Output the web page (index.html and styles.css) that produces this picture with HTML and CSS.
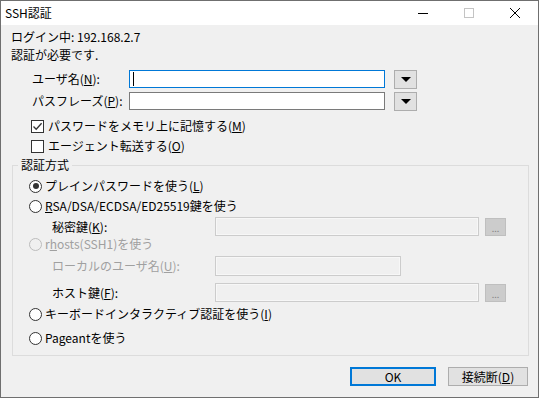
FILE: index.html
```html
<!DOCTYPE html>
<html lang="ja">

<head>
    <meta charset="UTF-8">
    <title>SSH認証</title>
    <link rel="stylesheet" href="styles.css">
</head>

<body>
    <div class="window">
        <div class="titlebar">
            <div class="title">SSH認証</div>
            <div class="caption-buttons">
                <span class="cap">
                    <svg width="10" height="10" viewBox="0 0 10 10"><path d="M0 5.5h10" stroke="#000" stroke-width="1"/></svg>
                </span>
                <span class="cap">
                    <svg width="10" height="10" viewBox="0 0 10 10"><rect x="0.5" y="0.5" width="9" height="9" fill="none" stroke="#c4c4c4"/></svg>
                </span>
                <span class="cap">
                    <svg width="10" height="10" viewBox="0 0 10 10"><path d="M0 0L10 10M10 0L0 10" stroke="#000" stroke-width="1"/></svg>
                </span>
            </div>
        </div>

        <div class="content">
            <div class="line login">ログイン中: 192.168.2.7</div>
            <div class="line required">認証が必要です.</div>

            <div class="field-row user-row">
                <label class="field-label">ユーザ名(<u>N</u>):</label>
                <div class="input focused"><span class="caret"></span></div>
                <button class="drop"><span class="tri"></span></button>
            </div>
            <div class="field-row pass-row">
                <label class="field-label">パスフレーズ(<u>P</u>):</label>
                <div class="input"></div>
                <button class="drop"><span class="tri"></span></button>
            </div>

            <div class="check-row cb1">
                <span class="checkbox">
                    <svg width="11" height="11" viewBox="0 0 11 11"><path d="M1.5 5.5L4.2 8.3L9.6 2.2" fill="none" stroke="#333" stroke-width="1.3"/></svg>
                </span>
                <span>パスワードをメモリ上に記憶する(<u>M</u>)</span>
            </div>
            <div class="check-row cb2">
                <span class="checkbox"></span>
                <span>エージェント転送する(<u>O</u>)</span>
            </div>

            <fieldset class="group">
                <legend>認証方式</legend>

                <div class="radio-row r1">
                    <span class="radio checked"></span>
                    <span>プレインパスワードを使う(<u>L</u>)</span>
                </div>
                <div class="radio-row r2">
                    <span class="radio"></span>
                    <span><u>R</u>SA/DSA/ECDSA/ED25519鍵を使う</span>
                </div>
                <div class="sub-row key-row">
                    <span class="sub-label">秘密鍵(<u>K</u>):</span>
                    <div class="input disabled wide"></div>
                    <button class="dots">...</button>
                </div>
                <div class="radio-row r3 off">
                    <span class="radio"></span>
                    <span>r<u>h</u>osts(SSH1)を使う</span>
                </div>
                <div class="sub-row local-row">
                    <span class="sub-label off">ローカルのユーザ名(<u>U</u>):</span>
                    <div class="input disabled short"></div>
                </div>
                <div class="sub-row host-row">
                    <span class="sub-label">ホスト鍵(<u>F</u>):</span>
                    <div class="input disabled wide"></div>
                    <button class="dots">...</button>
                </div>
                <div class="radio-row r4">
                    <span class="radio"></span>
                    <span>キーボードインタラクティブ認証を使う(<u>I</u>)</span>
                </div>
                <div class="radio-row r5">
                    <span class="radio"></span>
                    <span>Pageantを使う</span>
                </div>
            </fieldset>

            <div class="actions">
                <button class="btn default">OK</button>
                <button class="btn">接続断(<u>D</u>)</button>
            </div>
        </div>
    </div>
</body>

</html>
```

FILE: styles.css
```css
body {
    margin: 0;
    padding: 0;
    background-color: #f0f0f0;
    font-family: "Noto Sans CJK JP", "Noto Sans", sans-serif;
    font-size: 12px;
    color: #000;
}

.window {
    width: 539px;
    height: 398px;
    box-sizing: border-box;
    border: 1px solid #6f6f6f;
    background-color: #f0f0f0;
    display: flex;
    flex-direction: column;
    overflow: hidden;
}

.titlebar {
    height: 24px;
    background-color: #fff;
    display: flex;
    align-items: center;
    justify-content: space-between;
    flex-shrink: 0;
}

.title {
    padding-left: 4px;
    line-height: 14px;
}

.caption-buttons {
    display: flex;
    height: 100%;
}

.cap {
    width: 46px;
    display: flex;
    align-items: center;
    justify-content: center;
}

.cap svg {
    display: block;
}

.content {
    display: flex;
    flex-direction: column;
    padding-left: 10px;
    padding-right: 10px;
}

.line {
    height: 14px;
    line-height: 14px;
}

.login {
    margin-top: 5px;
}

.required {
    margin-top: 4px;
}

/* user / passphrase */
.field-row {
    height: 20px;
    display: flex;
    align-items: center;
    padding-left: 21px;
}

.user-row {
    margin-top: 7px;
}

.pass-row {
    margin-top: 2px;
}

.field-label {
    width: 97px;
    line-height: 14px;
}

.input {
    box-sizing: border-box;
    height: 18px;
    width: 256px;
    border: 1px solid #7a7a7a;
    background-color: #fff;
    position: relative;
}

.input.focused {
    border-color: #0078d7;
}

.caret {
    position: absolute;
    left: 3px;
    top: 1px;
    width: 1px;
    height: 14px;
    background-color: #000;
}

.drop {
    margin-left: 9px;
    width: 23px;
    height: 19px;
    box-sizing: border-box;
    border: 1px solid #adadad;
    background-color: #e1e1e1;
    padding: 0;
    display: flex;
    align-items: center;
    justify-content: center;
}

.tri {
    width: 0;
    height: 0;
    border-left: 5px solid transparent;
    border-right: 5px solid transparent;
    border-top: 5px solid #000;
    margin-top: 1px;
}

/* checkboxes */
.check-row {
    height: 16px;
    line-height: 14px;
    display: flex;
    align-items: center;
    padding-left: 20px;
}

.cb1 {
    margin-top: 7px;
}

.cb2 {
    margin-top: 4px;
}

.checkbox {
    width: 13px;
    height: 13px;
    box-sizing: border-box;
    border: 1px solid #333;
    background-color: #fff;
    margin-right: 4px;
    display: flex;
    align-items: center;
    justify-content: center;
}

.checkbox svg {
    display: block;
}

/* group box */
.group {
    margin: 4px 0 0 1px;
    width: 517px;
    box-sizing: border-box;
    border: 1px solid #dcdcdc;
    padding: 0 0 9px 0;
    display: flex;
    flex-direction: column;
}

.group legend {
    margin-left: 5px;
    padding: 0 3px;
    line-height: 14px;
    height: 14px;
}

.radio-row {
    height: 16px;
    line-height: 14px;
    display: flex;
    align-items: center;
    padding-left: 16px;
}

.radio {
    width: 13px;
    height: 13px;
    box-sizing: border-box;
    border: 1px solid #333;
    border-radius: 50%;
    background-color: #fff;
    margin-right: 3px;
    position: relative;
}

.radio.checked::after {
    content: "";
    position: absolute;
    left: 2.5px;
    top: 2.5px;
    width: 6px;
    height: 6px;
    border-radius: 50%;
    background-color: #333;
}

.off {
    color: #a0a0a0;
}

.off .radio {
    border-color: #bcbcbc;
    background-color: #f0f0f0;
}

.r1 {
    margin-top: 6px;
}

.r2 {
    margin-top: 4px;
}

.r4 {
    margin-top: 4px;
}

.r5 {
    margin-top: 8px;
}

.sub-row {
    display: flex;
    align-items: center;
    padding-left: 39px;
    height: 19px;
}

.key-row {
    margin-top: 3px;
}

.local-row {
    margin-top: 4px;
    height: 20px;
}

.host-row {
    margin-top: 7px;
}

.sub-label {
    width: 163px;
    line-height: 14px;
}

.input.disabled {
    border: 1px solid #cccccc;
    background-color: #f0f0f0;
    box-shadow: inset 0 0 0 1px #f7f7f7;
    height: 19px;
}

.local-row .input.disabled {
    height: 20px;
}

.input.wide {
    width: 264px;
}

.input.short {
    width: 186px;
}

.dots {
    margin-left: 6px;
    width: 21px;
    height: 18px;
    box-sizing: border-box;
    border: 1px solid #bfbfbf;
    background-color: #cccccc;
    color: #838383;
    font-family: inherit;
    font-size: 9px;
    line-height: 10px;
    padding: 4px 0 0 0;
}

/* bottom buttons */
.actions {
    margin-top: 11px;
    display: flex;
    justify-content: flex-end;
    gap: 12px;
}

.btn {
    height: 19px;
    width: 80px;
    box-sizing: border-box;
    border: 1px solid #adadad;
    background-color: #e1e1e1;
    font-family: inherit;
    font-size: 12px;
    line-height: 14px;
    padding: 0;
    color: #000;
}

.btn.default {
    width: 86px;
    border: 2px solid #0078d7;
}
```
